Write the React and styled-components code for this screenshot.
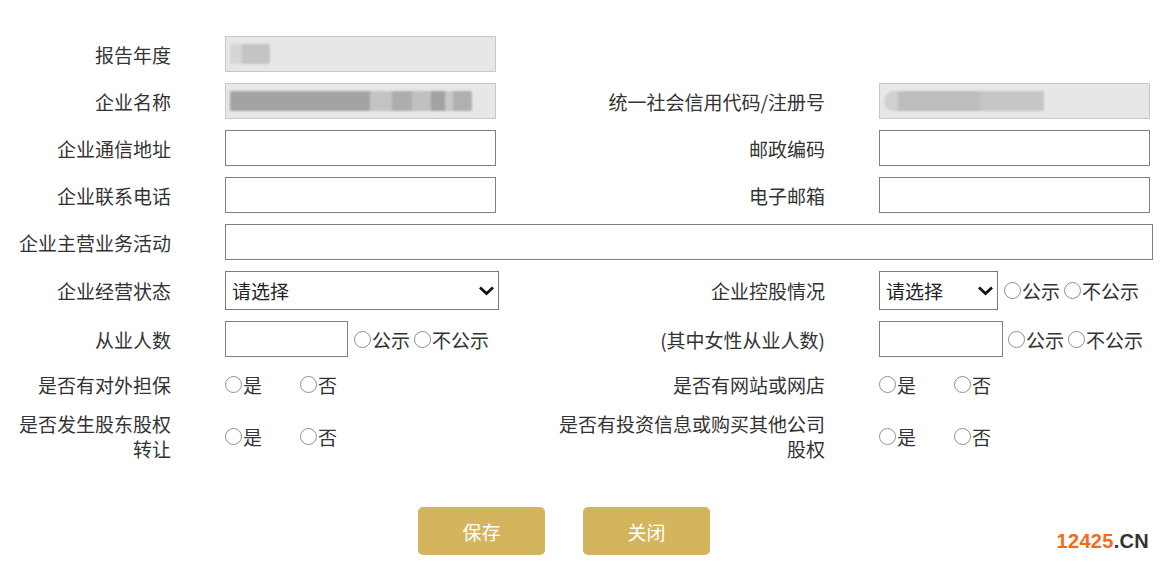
import React from 'react';
import styled, { createGlobalStyle } from 'styled-components';

const GlobalStyle = createGlobalStyle`
  body {
    margin: 0;
    background: #fff;
    font-family: 'Noto Sans CJK SC', 'Noto Sans', sans-serif;
    color: #333;
  }
`;

const Radio = ({ text }) => (
  <RadioItem>
    <Circle />
    {text}
  </RadioItem>
);

const PublicChoice = () => (
  <RadioGroup gap={4}>
    <Radio text="公示" />
    <Radio text="不公示" />
  </RadioGroup>
);

const YesNo = () => (
  <RadioGroup gap={38}>
    <Radio text="是" />
    <Radio text="否" />
  </RadioGroup>
);

const Chevron = () => (
  <svg width="17" height="11" viewBox="0 0 17 11">
    <path d="M2 2.5 L8.5 8.5 L15 2.5" fill="none" stroke="#111" strokeWidth="2.8" />
  </svg>
);

const App = () => {
  return (
    <Page>
      <GlobalStyle />
      <FormGrid>
        <Label>报告年度</Label>
        <Cell>
          <ReadOnlyBox>
            <Redact w={40} bg="linear-gradient(90deg, #d6d6d6 0 30%, #c4c4c4 30% 100%)" />
          </ReadOnlyBox>
        </Cell>
        <Cell />
        <Cell />

        <Label>企业名称</Label>
        <Cell>
          <ReadOnlyBox>
            <Redact
              w={242}
              bg="linear-gradient(90deg, #a3a3a3 0 58%, #c3c3c3 58% 67%, #adadad 67% 75%, #c0c0c0 75% 83%, #a2a2a2 83% 89%, #c8c8c8 89% 92%, #b0b0b0 92% 100%)"
            />
          </ReadOnlyBox>
        </Cell>
        <Label>统一社会信用代码/注册号</Label>
        <Cell>
          <ReadOnlyBox>
            <Redact
              w={160}
              round
              bg="linear-gradient(90deg, #d0d0d0 0 9%, #bdbdbd 9% 60%, #c6c6c6 60% 100%)"
            />
          </ReadOnlyBox>
        </Cell>

        <Label>企业通信地址</Label>
        <Cell>
          <TextInput />
        </Cell>
        <Label>邮政编码</Label>
        <Cell>
          <TextInput />
        </Cell>

        <Label>企业联系电话</Label>
        <Cell>
          <TextInput />
        </Cell>
        <Label>电子邮箱</Label>
        <Cell>
          <TextInput />
        </Cell>

        <Label>企业主营业务活动</Label>
        <WideCell>
          <TextInput width={928} />
        </WideCell>

        <Label>企业经营状态</Label>
        <Cell>
          <SelectBox width={274}>
            请选择
            <Chevron />
          </SelectBox>
        </Cell>
        <Label>企业控股情况</Label>
        <Cell gap={6}>
          <SelectBox width={119}>
            请选择
            <Chevron />
          </SelectBox>
          <PublicChoice />
        </Cell>

        <Label>从业人数</Label>
        <Cell gap={6}>
          <TextInput width={123} />
          <PublicChoice />
        </Cell>
        <Label>(其中女性从业人数)</Label>
        <Cell gap={5}>
          <TextInput width={124} />
          <PublicChoice />
        </Cell>

        <Label tall>是否有对外担保</Label>
        <Cell>
          <YesNo />
        </Cell>
        <Label tall>是否有网站或网店</Label>
        <Cell>
          <YesNo />
        </Cell>

        <Label>
          是否发生股东股权
          <br />
          转让
        </Label>
        <Cell>
          <YesNo />
        </Cell>
        <Label>
          是否有投资信息或购买其他公司
          <br />
          股权
        </Label>
        <Cell>
          <YesNo />
        </Cell>
      </FormGrid>

      <ButtonRow>
        <GoldButton>保存</GoldButton>
        <GoldButton>关闭</GoldButton>
      </ButtonRow>

      <Watermark>
        <Digits>12425</Digits>.CN
      </Watermark>
    </Page>
  );
};

const Page = styled.div`
  position: relative;
  width: 1162px;
  height: 569px;
  padding-top: 36px;
  box-sizing: border-box;
  overflow: hidden;
`;

const FormGrid = styled.div`
  display: grid;
  grid-template-columns: 171px 280px 266px 1fr;
  column-gap: 54px;
  row-gap: 11px;
  align-items: center;
`;

const Label = styled.div`
  display: flex;
  flex-direction: column;
  align-items: flex-end;
  justify-content: center;
  min-height: ${props => (props.tall ? '32px' : 'auto')};
  text-align: right;
  font-size: 19px;
  line-height: 25px;
  color: #333;
  white-space: nowrap;
`;

const Cell = styled.div`
  display: flex;
  align-items: center;
  gap: ${props => props.gap || 0}px;
`;

const WideCell = styled(Cell)`
  grid-column: 2 / span 3;
`;

const TextInput = styled.input`
  box-sizing: border-box;
  width: ${props => props.width || 271}px;
  height: 36px;
  margin: 0;
  padding: 0 6px;
  border: 1px solid #808080;
  background: #fff;
  font-family: inherit;
  font-size: 18px;
  outline: none;
`;

const ReadOnlyBox = styled.div`
  box-sizing: border-box;
  width: 271px;
  height: 36px;
  border: 1px solid #c8c8c8;
  background: #e7e7e7;
  display: flex;
  align-items: center;
  padding-left: 4px;
`;

const Redact = styled.span`
  display: block;
  width: ${props => props.w}px;
  height: 20px;
  background: ${props => props.bg};
  border-radius: ${props => (props.round ? '10px 0 0 10px' : '2px')};
  filter: blur(0.8px);
`;

const SelectBox = styled.div`
  box-sizing: border-box;
  width: ${props => props.width}px;
  height: 39px;
  border: 1px solid #7a7a7a;
  background: #fff;
  display: flex;
  align-items: center;
  justify-content: space-between;
  padding: 0 3px 0 6px;
  font-size: 19px;
  color: #222;
`;

const RadioGroup = styled.div`
  display: flex;
  align-items: center;
  gap: ${props => props.gap}px;
`;

const RadioItem = styled.label`
  display: inline-flex;
  align-items: center;
  font-size: 19px;
  line-height: 25px;
  color: #333;
`;

const Circle = styled.span`
  box-sizing: border-box;
  width: 17px;
  height: 17px;
  border: 1.5px solid #8e8e8e;
  border-radius: 50%;
  background: #fff;
  margin-right: 1px;
`;

const ButtonRow = styled.div`
  display: flex;
  gap: 38px;
  padding-left: 418px;
  margin-top: 46px;
`;

const GoldButton = styled.button`
  width: 127px;
  height: 48px;
  border: none;
  border-radius: 5px;
  background: #d4b45d;
  color: #fff;
  font-family: inherit;
  font-size: 19px;
  cursor: pointer;
`;

const Watermark = styled.div`
  position: absolute;
  right: 13px;
  top: 530px;
  font-family: 'Liberation Sans', Arial, sans-serif;
  font-weight: bold;
  font-size: 20px;
  letter-spacing: 0.3px;
  color: #333;
`;

const Digits = styled.span`
  color: #f26a1b;
`;

export default App;
